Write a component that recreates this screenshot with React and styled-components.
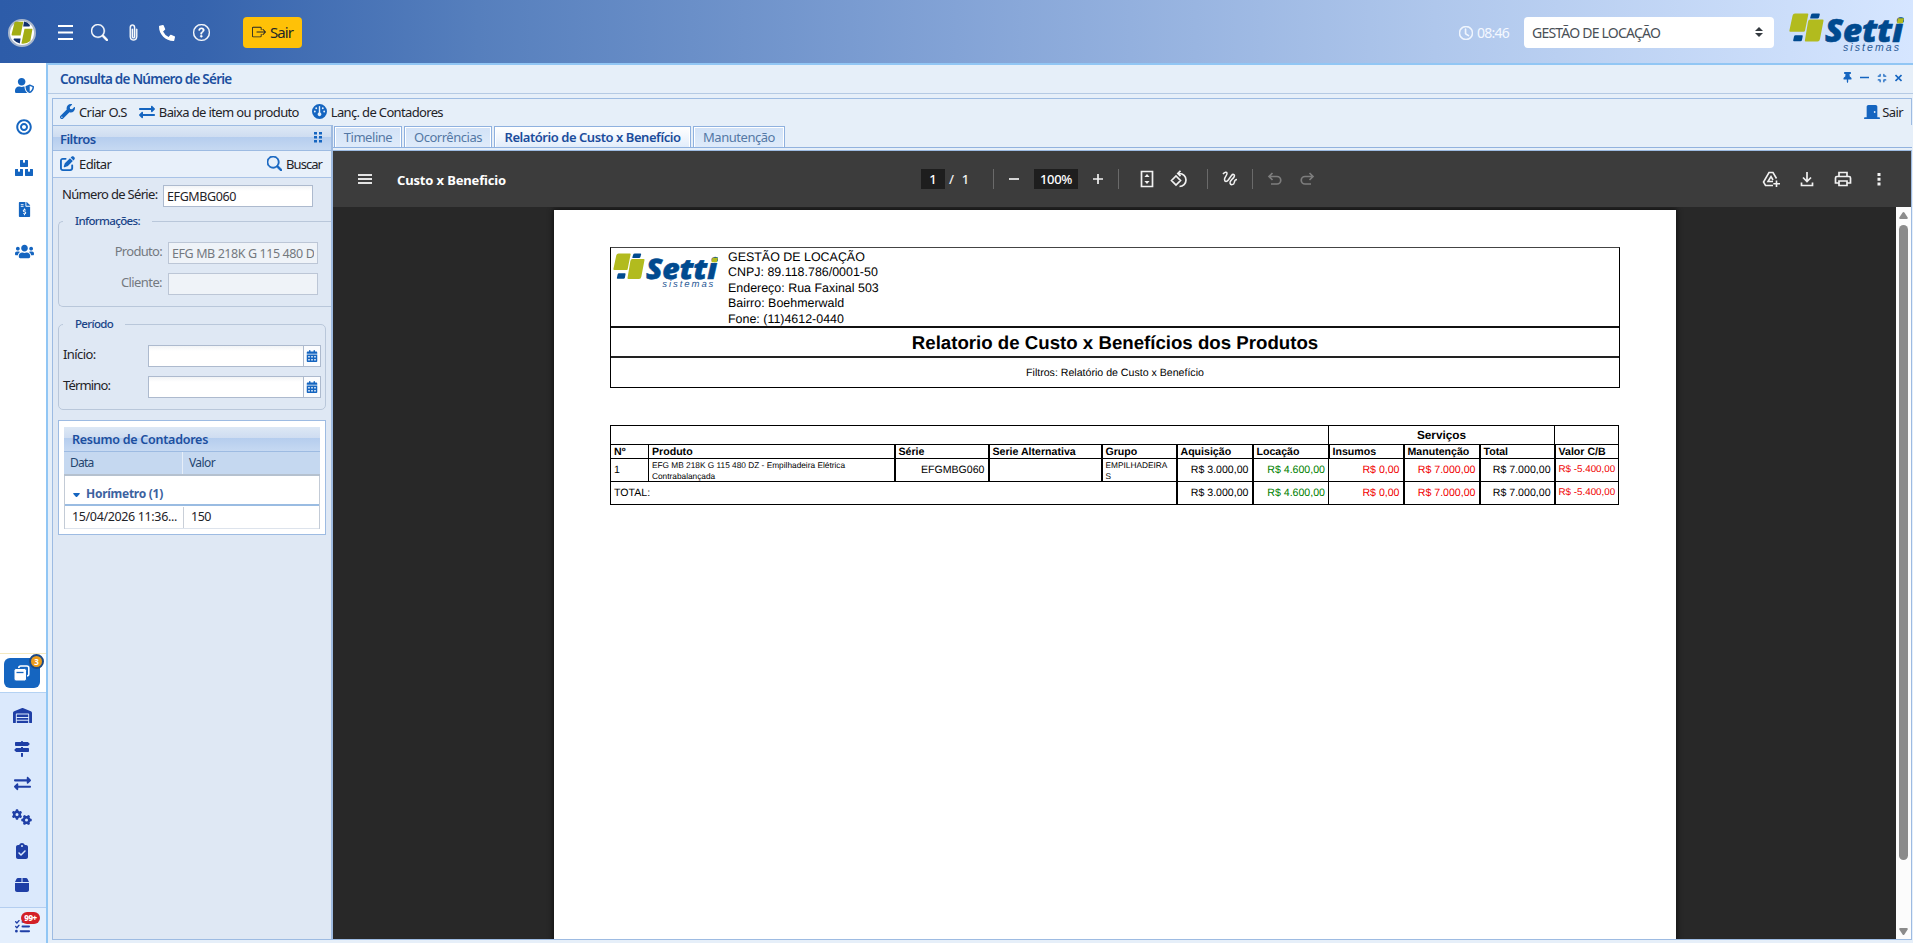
import React from 'react';
import styled, { createGlobalStyle, css } from 'styled-components';
import {
  FaUserShield, FaBoxes, FaFileInvoiceDollar, FaExchangeAlt, FaWrench, FaThumbtack, FaPhoneAlt, FaBullseye, FaUsers,
} from 'react-icons/fa';
import {
  FaGauge, FaSignsPost, FaGears, FaListCheck, FaCalendarDays, FaPenToSquare, FaDoorClosed, FaClipboardCheck,
  FaBox, FaWarehouse, FaCompress,
} from 'react-icons/fa6';
import { BsSearch, BsPaperclip, BsQuestionCircle, BsBoxArrowRight, BsClock } from 'react-icons/bs';

const blue = '#1565c0';
const line = '#9dbbe2';

const GlobalStyle = createGlobalStyle`
  *, *::before, *::after { box-sizing: border-box; }
  html, body { margin: 0; height: 100%; overflow: hidden; }
  body { font-family: 'Noto Sans', 'Open Sans', sans-serif; font-size: 13px; color: #1f2328; }
  svg { display: block; flex: none; }
`;

const Text = styled.span`
  white-space: nowrap;
  letter-spacing: ${(p) => p.$ls ?? -0.6}px;
`;

const Page = styled.div`
  display: flex;
  flex-direction: column;
  width: 1913px;
  height: 943px;
  overflow: hidden;
  background: #fff;
`;

/* ---------- header ---------- */
const Header = styled.header`
  display: flex;
  align-items: center;
  flex: none;
  height: 63px;
  padding: 2px 9px 0 8px;
  background: linear-gradient(90deg, #2d5ca9 0%, #3563ad 10%, #567fbd 25%, #83a3d6 50%, #afc7ec 75%, #d6e6ff 100%);
  color: #fff;
`;
const HeaderIcons = styled.nav`
  display: flex;
  align-items: center;
  margin-left: 12px;
`;
const HeaderIcon = styled.span`
  display: flex;
  justify-content: center;
  align-items: center;
  width: 34px;
  height: 32px;
  svg { stroke: currentColor; stroke-width: ${(p) => p.$bold ?? 0}; }
`;
const ExitButton = styled.button`
  display: flex;
  align-items: center;
  gap: 4px;
  width: 59px;
  height: 31px;
  margin: -1px 0 0 25px;
  padding: 0 8px 0 9px;
  border: 0;
  border-radius: 4px;
  background: #ffc107;
  color: #212529;
  font: 400 15px 'Noto Sans', sans-serif;
`;
const Clock = styled.div`
  display: flex;
  align-items: center;
  gap: 4px;
  margin-left: auto;
  font-size: 14px;
  color: #f4f8ff;
`;
const CompanySelect = styled.div`
  display: flex;
  align-items: center;
  justify-content: space-between;
  width: 250px;
  height: 31px;
  margin: -1px 15px 0 15px;
  padding: 0 11px 0 8px;
  border-radius: 4px;
  background: #fff;
  color: #495057;
  font-size: 14px;
`;

/* ---------- sidebar ---------- */
const Body = styled.div`
  display: flex;
  flex: 1;
  min-height: 0;
`;
const Sidebar = styled.aside`
  display: flex;
  flex-direction: column;
  flex: none;
  width: 46px;
  background: #fff;
`;
const SideTop = styled.div`
  display: flex;
  flex-direction: column;
  flex: 1;
  padding: 2px 0 0 2px;
  color: ${blue};
`;
const SideItem = styled.div`
  display: flex;
  align-items: center;
  justify-content: center;
  height: 41.4px;
`;
const SideActive = styled.div`
  position: relative;
  display: flex;
  align-items: center;
  height: 40px;
  padding: 0 4px 1px;
  border-top: 1px solid #f4e9c0;
  border-bottom: 1px solid #b4d2f3;
`;
const ActiveTile = styled.div`
  display: flex;
  align-items: center;
  justify-content: center;
  width: 36px;
  height: 30px;
  border-radius: 6px;
  background: ${blue};
`;
const CountBadge = styled.span`
  position: absolute;
  top: 0;
  left: 29px;
  width: 15px;
  height: 15px;
  border: 2px solid #1d4a86;
  border-radius: 50%;
  background: #eb9c1c;
  color: #fff;
  font-size: 8px;
  font-weight: 700;
  line-height: 11px;
  text-align: center;
`;
const SideBottom = styled.div`
  display: flex;
  flex-direction: column;
  height: 214px;
  padding-top: 5px;
  background: #dbe9fc;
  color: #1f3fa6;
`;
const SideSmall = styled.div`
  display: flex;
  align-items: center;
  justify-content: center;
  height: 34px;
  padding-right: 2px;
`;
const SideTasks = styled.div`
  position: relative;
  display: flex;
  justify-content: center;
  height: 36px;
  padding: 11px 2px 0 0;
  border-top: 1px solid #b4cef0;
  background: #e4effd;
  color: #1f3fa6;
`;
const AlertBadge = styled.span`
  position: absolute;
  top: 4px;
  left: 21px;
  width: 19px;
  height: 12px;
  border-radius: 6px;
  background: #d32027;
  color: #fff;
  font-size: 8px;
  font-weight: 800;
  line-height: 12px;
  text-align: center;
`;

/* ---------- window ---------- */
const Window = styled.main`
  display: flex;
  flex-direction: column;
  flex: 1;
  min-width: 0;
  border: solid #91c6f4;
  border-width: 2px 0 0 2px;
  background: #e6eff9;
`;
const TitleBar = styled.div`
  display: flex;
  align-items: center;
  justify-content: space-between;
  flex: none;
  height: 29px;
  padding: 0 11px 0 12px;
  border-bottom: 1px solid #b5cae4;
`;
const WindowTitle = styled.h1`
  margin: -1px 0 0;
  color: #1c4f9f;
  font-size: 13.5px;
  font-weight: 600;
`;
const WindowControls = styled.div`
  display: flex;
  align-items: center;
  margin-top: -3px;
  color: ${blue};
  svg:nth-child(2) { margin-left: 7px; }
  svg:nth-child(3) { margin-left: 8px; }
  svg:nth-child(4) { margin-left: 8px; }
`;
const Frame = styled.div`
  display: flex;
  flex-direction: column;
  flex: 1;
  min-height: 0;
  margin: 4px 1px 3px 4px;
  border: 1px solid ${line};
  border-right: 0;
`;
const Toolbar = styled.div`
  display: flex;
  align-items: center;
  flex: none;
  height: 26px;
  padding: 0 8px 1px 7px;
  border-right: 1px solid ${line};
`;
const ToolButton = styled.div`
  display: flex;
  align-items: center;
  gap: ${(p) => p.$gap ?? 4}px;
  margin-left: ${(p) => p.$ml ?? 0};
  svg { color: ${blue}; }
`;
const Columns = styled.div`
  display: flex;
  flex: 1;
  min-height: 0;
`;

/* ---------- filter panel ---------- */
const FilterPanel = styled.section`
  flex: none;
  display: flex;
  flex-direction: column;
  width: 280px;
  border-right: 2px solid #9ebae0;
  border-top: 1px solid ${line};
  background: #dfe8f4;
`;
const barGradient = css`
  background: linear-gradient(#dde8f5 0, #cfddf1 44%, #b5cdee 46%, #c6d9f2 100%);
`;
const PanelHeader = styled.div`
  display: flex;
  align-items: center;
  justify-content: space-between;
  height: 25px;
  padding: 1px 9px 0 7px;
  border-bottom: 1px solid ${line};
  ${barGradient}
  color: #1c4f9f;
  font-weight: 600;
  svg { margin-top: -3px; }
`;
const PanelToolbar = styled.div`
  display: flex;
  align-items: center;
  justify-content: space-between;
  height: 27px;
  padding: 0 9px 1px 7px;
  border-bottom: 1px solid #a8c2e6;
  background: #e8f0fa;
`;
const FormRow = styled.div`
  display: grid;
  grid-template-columns: ${(p) => p.$cols};
  height: 31px;
  color: ${(p) => (p.$muted ? '#74797f' : '#1f2328')};
`;
const FormLabel = styled.label`
  padding: ${(p) => p.$pad ?? '0 6px 0 0'};
  line-height: 18px;
  text-align: ${(p) => p.$align ?? 'right'};
`;
const TextBox = styled.div`
  width: 150px;
  height: 22px;
  padding: 0 3px;
  overflow: hidden;
  border: 1px solid ${(p) => (p.$muted ? '#bcc6d6' : '#adbace')};
  background: ${(p) => (p.$muted ? '#eff3f8' : 'linear-gradient(#f2f4f6, #fff 5px)')};
  font-size: 12.5px;
  line-height: 21px;
`;
const ClipText = styled(Text)`
  display: block;
  overflow: hidden;
`;
const DateBox = styled.div`
  display: flex;
  width: 173px;
  height: 22px;
  border: 1px solid #adbace;
  background: linear-gradient(#f2f4f6, #fff 5px);
`;
const DateTrigger = styled.span`
  display: flex;
  align-items: center;
  justify-content: center;
  width: 17px;
  margin-left: auto;
  border-left: 1px solid #adbace;
  background: #fbfcfe;
  color: ${blue};
`;
const NumberRow = styled(FormRow)`
  padding: 7px 0 0 9px;
  height: 35px;
`;
const Group = styled.fieldset`
  margin: ${(p) => p.$margin};
  height: ${(p) => p.$height}px;
  padding: ${(p) => p.$pad};
  min-width: 0;
  border: 1px solid #b9c7da;
  border-radius: 5px;
  ${(p) => p.$open && 'border-right: 0; border-radius: 5px 0 0 5px;'}
`;
const Legend = styled.legend`
  margin-left: 4px;
  padding: 0 12px;
  height: 16px;
  color: #1a4488;
  font-size: 11.5px;
  font-weight: 500;
  line-height: 15px;
`;
const Summary = styled.div`
  width: 268px;
  height: 115px;
  margin: 10px 0 0 5px;
  padding: 6px 5px 0;
  border: 1px solid ${line};
  background: #fff;
`;
const SummaryTitle = styled.div`
  height: 25px;
  padding-left: 8px;
  ${barGradient}
  border-bottom: 1px solid ${line};
  color: #1c4f9f;
  font-size: 12.5px;
  font-weight: 600;
  line-height: 25px;
`;
const SummaryHead = styled.div`
  display: grid;
  grid-template-columns: 119px 1fr;
  height: 24px;
  border-bottom: 2px solid #b5c1cf;
  background: #c5d8f0;
  color: #24456f;
  font-size: 12px;
  line-height: 22px;
`;
const SummaryBody = styled.div`
  border: solid #c3cbd6;
  border-width: 0 1px;
`;
const SummaryGroup = styled.div`
  display: flex;
  gap: 6px;
  height: 30px;
  padding: 10px 0 0 8px;
  border-bottom: 2px solid #9abce2;
  color: #3c629f;
  font-size: 12px;
  font-weight: 700;
  line-height: 16px;
  svg { margin-top: 7px; }
`;
const SummaryRow = styled.div`
  display: grid;
  grid-template-columns: 119px 1fr;
  height: 23px;
  padding-top: 1px;
  border-bottom: 1px solid #dde3ec;
  font-size: 12.5px;
  line-height: 20px;
`;
const SummaryCell = styled.span`
  padding-left: ${(p) => p.$left ?? 7}px;
  border-right: ${(p) => (p.$divider ? `1px solid ${p.$divider}` : 0)};
`;

/* ---------- tabs ---------- */
const Content = styled.section`
  display: flex;
  flex-direction: column;
  flex: 1;
  min-width: 0;
`;
const Tabs = styled.div`
  display: flex;
  gap: 2px;
  flex: none;
  height: 23px;
  padding: 1px 0 0 1px;
  border-bottom: 1px solid #92b2de;
`;
const Tab = styled.div`
  width: ${(p) => p.$width}px;
  height: 22px;
  padding-top: 1px;
  border: 1px solid #8fb1df;
  box-shadow: inset 1px 1px #fff, inset -1px 0 #fff;
  background: ${(p) => (p.$active ? 'linear-gradient(#fff, #e2edfb)' : 'linear-gradient(#d2e2f7, #dfebfa)')};
  color: ${(p) => (p.$active ? '#1b4c9b' : '#5478a5')};
  font-weight: ${(p) => (p.$active ? 600 : 400)};
  line-height: 19px;
  text-align: center;
`;

/* ---------- pdf viewer ---------- */
const Viewer = styled.div`
  display: flex;
  flex-direction: column;
  flex: 1;
  min-height: 0;
  margin-top: 2px;
  border: solid ${line};
  border-width: 1px 1px 0 0;
  background: #282828;
`;
const ViewerBar = styled.div`
  display: grid;
  grid-template-columns: 588px 1fr auto;
  align-items: center;
  flex: none;
  height: 56px;
  background: #3c3c3c;
  color: #f1f1f1;
`;
const ViewerTitle = styled.div`
  display: flex;
  align-items: center;
  gap: 25px;
  padding: 2px 0 0 25px;
  color: #fff;
  font-weight: 700;
  svg { margin-top: -2px; color: #e3e3e3; }
`;
const ViewerTools = styled.div`
  display: flex;
  align-items: center;
`;
const Field = styled.span`
  width: ${(p) => p.$width}px;
  height: 20px;
  background: #1e1e1e;
  color: #fff;
  font-weight: 500;
  line-height: 20px;
  text-align: center;
`;
const Slot = styled.span`
  display: flex;
  justify-content: center;
  width: ${(p) => p.$width}px;
  color: ${(p) => (p.$dim ? '#7d7d7d' : '#f1f1f1')};
  font-weight: 500;
`;
const Rule = styled.span`
  width: 1px;
  height: 20px;
  background: #6a6a6a;
`;
const ViewerActions = styled.div`
  display: flex;
  align-items: center;
  width: 158px;
`;
const ViewerBody = styled.div`
  display: flex;
  flex: 1;
  min-height: 0;
`;
const PageArea = styled.div`
  display: flex;
  flex: 1;
  overflow: hidden;
  padding: 3px 0 0 221px;
`;
const Scrollbar = styled.div`
  display: flex;
  flex-direction: column;
  align-items: center;
  width: 15px;
  padding: 5px 0 4px;
  background: #fcfcfc;
`;
const Thumb = styled.div`
  width: 9px;
  height: 635px;
  margin: 6px 0 auto;
  border-radius: 5px;
  background: #8b8b8b;
`;

/* ---------- report ---------- */
const Sheet = styled.article`
  width: 1122px;
  height: 900px;
  padding: 37px 56px 0;
  background: #fff;
  box-shadow: 0 0 5px 1px #111;
  color: #000;
  font-family: 'Liberation Sans', Arial, sans-serif;
  text-rendering: geometricPrecision;
`;
const ReportHead = styled.div`
  width: 1010px;
  border: 1px solid #000;
  border-top-color: #444;
`;
const CompanyRow = styled.div`
  display: flex;
  height: 80px;
  padding: 5px 0 0 2px;
  border-bottom: 2px solid #111;
`;
const CompanyInfo = styled.div`
  margin: -3.5px 0 0 10px;
  font-size: 12.45px;
  line-height: 15.6px;
`;
const ReportTitle = styled.h2`
  height: 30px;
  margin: 0;
  border-bottom: 2px solid #222;
  font-size: 18.67px;
  line-height: 30px;
  text-align: center;
`;
const ReportFilter = styled.div`
  height: 29px;
  font-size: 10.6px;
  line-height: 30px;
  text-align: center;
`;
const ReportTable = styled.table`
  width: 1009px;
  margin-top: 37px;
  border-collapse: collapse;
  table-layout: fixed;
  font-size: 10.6px;
`;
const Tr = styled.tr`
  height: ${(p) => p.$height}px;
`;
const Cell = styled.td`
  padding: ${(p) => (p.$wrap ? '1px 3px 0' : '0 3px')};
  overflow: hidden;
  border: solid #000;
  border-width: 1.5px 1px;
  border-left-width: ${(p) => (p.$thick ? 2 : 1)}px;
  color: ${(p) => p.$color ?? '#000'};
  font-size: ${(p) => p.$size ?? 10.6}px;
  font-weight: ${(p) => (p.$bold ? 700 : 400)};
  line-height: ${(p) => p.$lh ?? '12px'};
  text-align: ${(p) => p.$align ?? 'left'};
  white-space: ${(p) => (p.$wrap ? 'pre-line' : 'nowrap')};
`;

/* ---------- drawings ---------- */
const SettiLogo = ({ width, height }) => (
  <svg width={width} height={height} viewBox="0 0 115 40">
    <path d="M6 .5 H18.5 Q19.5 .5 19.3 1.500 L16 17.700 Q15.800 18.700 14.500 18.700 H1.500 Q.1 18.700 .4 17.500 L3.600 2.500 Q4.100 .5 6 .5Z" fill="#b2bb1e" />
    <path d="M24 .6 H30 Q31 .6 30.800 1.500 L30 4.500 Q29.700 5.600 28.500 5.600 H22 Q21 5.600 21.200 4.700 L22 1.800 Q22.300 .6 24 .6Z" fill="#004a8f" />
    <path d="M21 6.600 H33.500 Q34.800 6.600 34.500 7.800 L31 26 Q30.500 28.500 28.500 28.500 H16.800 Q15.600 28.500 15.900 27.200 L19 8.700 Q19.500 6.600 21 6.600Z" fill="#b2bb1e" />
    <path d="M6.500 22.300 H13 Q14 22.300 13.700 23.300 L13 27 Q12.700 28.200 11.500 28.200 H5 Q4 28.200 4.200 27.300 L5 23.500 Q5.300 22.300 6.500 22.300Z" fill="#004a8f" />
    <text x="36" y="28.500" textLength="78" lengthAdjust="spacingAndGlyphs" fill="#004a8f" stroke="#004a8f" strokeWidth=".6" fontFamily="Open Sans" fontSize="31" fontWeight="800" fontStyle="italic">Setti</text>
    <path d="M109 5.200 h6 l-1.100 5 h-6z" fill="#b2bb1e" />
    <text x="54" y="37.700" textLength="56" fill="#2a5a96" fontFamily="Liberation Sans" fontSize="10.500" fontStyle="italic">sistemas</text>
  </svg>
);
const RoundMark = () => (
  <svg width="28" height="28" viewBox="0 0 28 28">
    <circle cx="14" cy="14" r="13" fill="#fff" stroke="#a9b7cc" strokeWidth="2" />
    <path d="M6.500 3.500 Q6.800 2.800 8 2.800 H15.300 L12.600 16.500 H4.500 Q3.300 16.500 3.600 15.200Z M16.500 9.700 H24.500 L22.300 22 Q18.500 25 14.500 24.800 L13.400 24.500Z" fill="#a3ae14" />
    <path d="M16 2.600 Q19.500 2.800 22 6 L21.500 7.600 H15.200Z M6 19.500 H12.600 L11.800 24.500 Q8.500 24 5.500 20.800Z" fill="#10306c" />
  </svg>
);
const MenuIcon = ({ width, step, stroke = 1.8 }) => (
  <svg width={width} height={step * 2 + 2} viewBox={`0 0 ${width} ${step * 2 + 2}`}>
    <path d={`M0 1H${width}M0 ${1 + step}H${width}M0 ${1 + step * 2}H${width}`} stroke="currentColor" strokeWidth={stroke} />
  </svg>
);
const Carets = () => (
  <svg width="8" height="10" viewBox="0 0 8 10"><path d="M4 0l4 4H0zM4 10l4-4H0z" fill="#343a40" /></svg>
);
const WindowsIcon = () => (
  <svg width="16" height="16" viewBox="0 0 16 16">
    <rect x="4.800" y="1" width="10" height="10" rx="2" fill="none" stroke="#fff" strokeWidth="1.600" />
    <rect x="0" y="3.500" width="12.500" height="12.500" rx="2" fill="#fff" stroke={blue} />
    <path d="M2.500 7.500h7" stroke={blue} strokeWidth="1.300" />
  </svg>
);
const DotsIcon = () => (
  <svg width="8" height="11" viewBox="0 0 8 11">
    <path d="M0 0h3v2.600H0zM5 0h3v2.600H5zM0 4h3v2.600H0zM5 4h3v2.600H5zM0 8h3v2.600H0zM5 8h3v2.600H5z" fill={blue} />
  </svg>
);
const MinusIcon = () => <svg width="9" height="9" viewBox="0 0 9 9"><path d="M0 4.500h9" stroke="currentColor" strokeWidth="1.500" /></svg>;
const CloseIcon = () => <svg width="7" height="8" viewBox="0 0 7 8"><path d="M.5 1l6 6M6.500 1l-6 6" stroke="currentColor" strokeWidth="1.600" /></svg>;
const Arrow = ({ up, width, height, color = '#8b8b8b' }) => (
  <svg width={width} height={height} viewBox="0 0 10 8" preserveAspectRatio="none">
    <path d={up ? 'M4 .7Q5 -.5 6 .7L9.800 6.500Q10 8 8.500 8H1.500Q0 8 .2 6.500Z' : 'M4 7.300Q5 8.500 6 7.300L9.800 1.500Q10 0 8.500 0H1.500Q0 0 .2 1.500Z'} fill={color} />
  </svg>
);
const Stroke = ({ size = 18, d, fill, w = 1.7 }) => (
  <svg width={size} height={size} viewBox="0 0 18 18" fill="none" stroke="currentColor" strokeWidth={w}>
    <path d={d} />
    {fill && <path d={fill} fill="currentColor" stroke="none" />}
  </svg>
);

const sideTop = [
  [FaUserShield, 19], [FaBullseye, 16], [FaBoxes, 18], [FaFileInvoiceDollar, 15], [FaUsers, 19],
];
const sideBottom = [
  [FaWarehouse, 19], [FaSignsPost, 16], [FaExchangeAlt, 17], [FaGears, 20], [FaClipboardCheck, 16], [FaBox, 16],
];
const columns = [38, 246, 94, 113, 75, 76, 76, 75, 76, 75, 64];
const heads = ['Nº', 'Produto', 'Série', 'Serie Alternativa', 'Grupo', 'Aquisição', 'Locação', 'Insumos', 'Manutenção', 'Total', 'Valor C/B'];
const amounts = [
  ['R$ 3.000,00'], ['R$ 4.600,00', '#008000'], ['R$ 0,00', '#f00000'], ['R$ 7.000,00', '#f00000'], ['R$ 7.000,00'],
  ['R$ -5.400,00', '#f00000', 9.8],
];
const AmountCells = () => amounts.map(([value, color, size], i) => (
  <Cell key={i} $align="right" $color={color} $size={size} $thick={i !== 2}>{value}</Cell>
));

const Report = () => (
  <Sheet>
    <ReportHead>
      <CompanyRow>
        <SettiLogo width={105} height={36.5} />
        <CompanyInfo>
          <div>GESTÃO DE LOCAÇÃO</div>
          <div>CNPJ: 89.118.786/0001-50</div>
          <div>Endereço: Rua Faxinal 503</div>
          <div>Bairro: Boehmerwald</div>
          <div>Fone: (11)4612-0440</div>
        </CompanyInfo>
      </CompanyRow>
      <ReportTitle>Relatorio de Custo x Benefícios dos Produtos</ReportTitle>
      <ReportFilter>Filtros: Relatório de Custo x Benefício</ReportFilter>
    </ReportHead>
    <ReportTable>
      <colgroup>{columns.map((w, i) => <col key={i} width={w} />)}</colgroup>
      <tbody>
        <Tr $height={19}>
          <Cell colSpan={7} />
          <Cell colSpan={3} $bold $size={11.8} $align="center">Serviços</Cell>
          <Cell />
        </Tr>
        <Tr $height={14}>{heads.map((h, i) => <Cell key={h} $bold $thick={i > 1} $size={10.6}>{h}</Cell>)}</Tr>
        <Tr $height={22}>
          <Cell>1</Cell>
          <Cell $wrap $size={8.3} $lh="10.500px">{'EFG MB 218K G 115 480 DZ - Empilhadeira Elétrica\nContrabalançada'}</Cell>
          <Cell $align="right" $thick>EFGMBG060</Cell>
          <Cell $thick />
          <Cell $wrap $size={8.3} $lh="10.500px" $thick>{'EMPILHADEIRA\nS'}</Cell>
          <AmountCells />
        </Tr>
        <Tr $height={23}>
          <Cell colSpan={5}>TOTAL:</Cell>
          <AmountCells />
        </Tr>
      </tbody>
    </ReportTable>
  </Sheet>
);

const PdfViewer = () => (
  <Viewer>
    <ViewerBar>
      <ViewerTitle><MenuIcon width={14} step={4} /><Text $ls={-0.15}>Custo x Beneficio</Text></ViewerTitle>
      <ViewerTools>
        <Field $width={24}>1</Field>
        <Slot $width={13}>/</Slot>
        <Slot $width={15}>1</Slot>
        <Slot $width={20} />
        <Rule />
        <Slot $width={40}><Stroke size={18} d="M4 9h10" /></Slot>
        <Field $width={44}><Text $ls={-0.35}>100%</Text></Field>
        <Slot $width={40}><Stroke d="M4 9h10M9 4v10" /></Slot>
        <Rule />
        <Slot $width={56}><Stroke d="M3.500 1.500h11v15h-11z" fill="M9 4l2.600 3H6.400zM9 14l2.600-3H6.400z" /></Slot>
        <Slot $width={8}><Stroke d="M1.500 10.500L6 6l4.500 4.500L6 15zM8 3.500h1.500A6.500 6.500 0 1 1 9.500 16.500M10.500 .8L7.800 3.500l2.700 2.700" /></Slot>
        <Slot $width={24} />
        <Rule />
        <Slot $width={44}><Stroke d="M2 4C3.500 2 6 1.500 6 3.500C6 5.500 3.500 7 3.500 9.500C3.500 12 6 12 7.300 10L10.500 5.500C12 3.500 14.500 4.500 13 7C11.500 9.500 8.500 10.500 9 13C9.500 15.500 13 15 13.300 12.500C13.500 10.500 14.500 9.500 16 9.500" w={1.5} /></Slot>
        <Rule />
        <Slot $width={44} $dim><Stroke d="M6.500 3L3 6.500L6.500 10M3.500 6.500H11a3.700 3.700 0 0 1 0 7.500H5" /></Slot>
        <Slot $width={20} $dim><Stroke d="M11.500 3L15 6.500L11.500 10M14.500 6.500H7a3.700 3.700 0 0 0 0 7.500H13" /></Slot>
      </ViewerTools>
      <ViewerActions>
        <Slot $width={36}><Stroke d="M11 15.500H3.500L1.500 12L7 2.500H11L14.500 8.500M11 11.500H6L9 6.500L11 10M14.500 10.500V17M11.300 13.700H18" w={1.6} /></Slot>
        <Slot $width={36}><Stroke d="M9 2v9M5 7.500L9 11.500L13 7.500M3.500 12.500V15.500H14.500V12.500" /></Slot>
        <Slot $width={36}><Stroke d="M5 6.500V2.500H13V6.500M4.500 13H1.500V8Q1.500 6.500 3 6.500H15Q16.500 6.500 16.500 8V13H13.500M5 11H13V15.500H5Z" /></Slot>
        <Slot $width={36}><Stroke fill="M7.500 3h3v3h-3zM7.500 7.700h3v3h-3zM7.500 12.400h3v3h-3z" /></Slot>
      </ViewerActions>
    </ViewerBar>
    <ViewerBody>
      <PageArea><Report /></PageArea>
      <Scrollbar>
        <Arrow up width={9} height={7} />
        <Thumb />
        <Arrow width={9} height={7} />
      </Scrollbar>
    </ViewerBody>
  </Viewer>
);

const Filters = () => (
  <FilterPanel>
    <PanelHeader><Text $ls={-0.55}>Filtros</Text><DotsIcon /></PanelHeader>
    <PanelToolbar>
      <ToolButton><FaPenToSquare size={15} color={blue} /><Text>Editar</Text></ToolButton>
      <ToolButton><BsSearch size={15} strokeWidth={0.9} /><Text $ls={-0.95}>Buscar</Text></ToolButton>
    </PanelToolbar>
    <NumberRow $cols="101px 1fr">
      <FormLabel $align="left"><Text $ls={-0.69}>Número de Série:</Text></FormLabel>
      <TextBox><Text $ls={-0.4}>EFGMBG060</Text></TextBox>
    </NumberRow>
    <Group $open $height={94} $margin="0 0 0 5px" $pad="13px 0 0">
      <Legend><Text $ls={-0.65}>Informações:</Text></Legend>
      <FormRow $muted $cols="109px 1fr">
        <FormLabel><Text $ls={-0.7}>Produto:</Text></FormLabel>
        <TextBox $muted><ClipText $ls={-0.41}>EFG MB 218K G 115 480 DZ</ClipText></TextBox>
      </FormRow>
      <FormRow $muted $cols="109px 1fr">
        <FormLabel><Text>Cliente:</Text></FormLabel>
        <TextBox $muted />
      </FormRow>
    </Group>
    <Group $height={94} $margin="9px 5px 0" $pad="13px 0 0">
      <Legend><Text $ls={-0.65}>Período</Text></Legend>
      <FormRow $cols="89px 1fr">
        <FormLabel $align="left" $pad="0 0 0 4px"><Text>Início:</Text></FormLabel>
        <DateBox><DateTrigger><FaCalendarDays size={12} /></DateTrigger></DateBox>
      </FormRow>
      <FormRow $cols="89px 1fr">
        <FormLabel $align="left" $pad="0 0 0 4px"><Text $ls={-0.85}>Término:</Text></FormLabel>
        <DateBox><DateTrigger><FaCalendarDays size={12} /></DateTrigger></DateBox>
      </FormRow>
    </Group>
    <Summary>
      <SummaryTitle><Text $ls={-0.25}>Resumo de Contadores</Text></SummaryTitle>
      <SummaryHead>
        <SummaryCell $left={6} $divider="#e6eef8"><Text $ls={-0.8}>Data</Text></SummaryCell>
        <SummaryCell $left={6}><Text>Valor</Text></SummaryCell>
      </SummaryHead>
      <SummaryBody>
        <SummaryGroup><Arrow width={7} height={4} color={blue} /><Text $ls={-0.27}>Horímetro (1)</Text></SummaryGroup>
        <SummaryRow>
          <SummaryCell $divider="#c9cfd8"><Text $ls={-0.36}>15/04/2026 11:36...</Text></SummaryCell>
          <SummaryCell><Text $ls={-0.48}>150</Text></SummaryCell>
        </SummaryRow>
      </SummaryBody>
    </Summary>
  </FilterPanel>
);

export default function App() {
  return (
    <Page>
      <GlobalStyle />
      <Header>
        <RoundMark />
        <HeaderIcons>
          <HeaderIcon><MenuIcon width={15} step={6.5} stroke={2} /></HeaderIcon>
          <HeaderIcon $bold={0.4}><BsSearch size={17} /></HeaderIcon>
          <HeaderIcon $bold={0.4}><BsPaperclip size={17} /></HeaderIcon>
          <HeaderIcon><FaPhoneAlt size={16} /></HeaderIcon>
          <HeaderIcon $bold={0.4}><BsQuestionCircle size={17} /></HeaderIcon>
        </HeaderIcons>
        <ExitButton><BsBoxArrowRight size={14} /><Text $ls={-0.9}>Sair</Text></ExitButton>
        <Clock><BsClock size={14} strokeWidth={0.8} /><Text $ls={-0.76}>08:46</Text></Clock>
        <CompanySelect><Text $ls={-0.78}>GESTÃO DE LOCAÇÃO</Text><Carets /></CompanySelect>
        <SettiLogo width={115} height={40} />
      </Header>
      <Body>
        <Sidebar>
          <SideTop>{sideTop.map(([Icon, size], i) => <SideItem key={i}><Icon size={size} /></SideItem>)}</SideTop>
          <SideActive>
            <ActiveTile><WindowsIcon /></ActiveTile>
            <CountBadge>3</CountBadge>
          </SideActive>
          <SideBottom>{sideBottom.map(([Icon, size], i) => <SideSmall key={i}><Icon size={size} /></SideSmall>)}</SideBottom>
          <SideTasks><FaListCheck size={15} /><AlertBadge><Text $ls={-0.5}>99+</Text></AlertBadge></SideTasks>
        </Sidebar>
        <Window>
          <TitleBar>
            <WindowTitle><Text $ls={-0.75}>Consulta de Número de Série</Text></WindowTitle>
            <WindowControls><FaThumbtack size={11} /><MinusIcon /><FaCompress size={10} /><CloseIcon /></WindowControls>
          </TitleBar>
          <Frame>
            <Toolbar>
              <ToolButton><FaWrench size={15} /><Text>Criar O.S</Text></ToolButton>
              <ToolButton $ml="12px"><FaExchangeAlt size={16} /><Text $ls={-0.63}>Baixa de item ou produto</Text></ToolButton>
              <ToolButton $ml="13px"><FaGauge size={15} /><Text $ls={-0.66}>Lanç. de Contadores</Text></ToolButton>
              <ToolButton $ml="auto" $gap={2}><FaDoorClosed size={16} /><Text>Sair</Text></ToolButton>
            </Toolbar>
            <Columns>
              <Filters />
              <Content>
                <Tabs>
                  <Tab $width={68}><Text $ls={-0.46}>Timeline</Text></Tab>
                  <Tab $width={88}><Text $ls={-0.47}>Ocorrências</Text></Tab>
                  <Tab $width={197} $active><Text $ls={-0.45}>Relatório de Custo x Benefício</Text></Tab>
                  <Tab $width={92}><Text $ls={-0.46}>Manutenção</Text></Tab>
                </Tabs>
                <PdfViewer />
              </Content>
            </Columns>
          </Frame>
        </Window>
      </Body>
    </Page>
  );
}
